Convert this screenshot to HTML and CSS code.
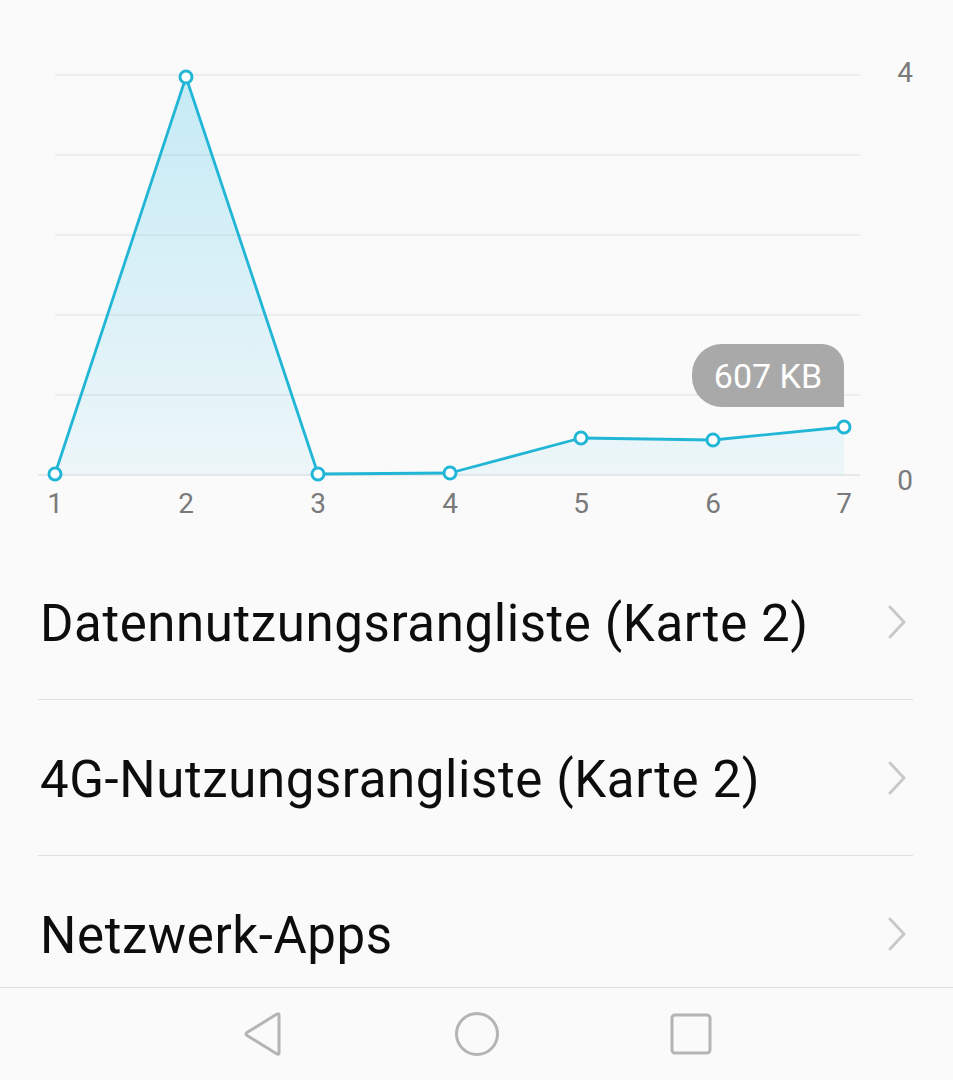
FILE: index.html
```html
<!DOCTYPE html>
<html lang="de">

<head>
    <meta charset="UTF-8">
    <meta name="viewport" content="width=device-width, initial-scale=1.0">
    <title>Datennutzung</title>
    <link rel="stylesheet" href="styles.css">
</head>

<body>
    <div class="screen">
        <div class="chart">
            <svg class="chart-svg" width="953" height="544" viewBox="0 0 953 544">
                <defs>
                    <linearGradient id="area-fill" gradientUnits="userSpaceOnUse" x1="0" y1="77" x2="0" y2="475">
                        <stop offset="0" stop-color="#1eb9e6" stop-opacity="0.24" />
                        <stop offset="1" stop-color="#1eb9e6" stop-opacity="0.06" />
                    </linearGradient>
                </defs>

                <!-- Rasterlinien -->
                <g class="grid">
                    <line x1="55" y1="75" x2="860" y2="75" />
                    <line x1="55" y1="155" x2="860" y2="155" />
                    <line x1="55" y1="235" x2="860" y2="235" />
                    <line x1="55" y1="315" x2="860" y2="315" />
                    <line x1="55" y1="395" x2="860" y2="395" />
                    <line x1="38" y1="475" x2="860" y2="475" class="axis" />
                </g>

                <polygon class="area" points="55,474 186,77 318,474 450,473 581,438 713,440 844,427 844,475 55,475" />
                <polyline class="line" points="55,474 186,77 318,474 450,473 581,438 713,440 844,427" />

                <g class="dots">
                    <circle cx="55" cy="474" r="6" />
                    <circle cx="186" cy="77" r="6" />
                    <circle cx="318" cy="474" r="6" />
                    <circle cx="450" cy="473" r="6" />
                    <circle cx="581" cy="438" r="6" />
                    <circle cx="713" cy="440" r="6" />
                    <circle cx="844" cy="427" r="6" />
                </g>

                <g class="x-labels">
                    <text x="55" y="513">1</text>
                    <text x="186" y="513">2</text>
                    <text x="318" y="513">3</text>
                    <text x="450" y="513">4</text>
                    <text x="581" y="513">5</text>
                    <text x="713" y="513">6</text>
                    <text x="844" y="513">7</text>
                </g>

                <g class="y-labels">
                    <text x="905" y="82">4</text>
                    <text x="905" y="490">0</text>
                </g>
            </svg>

            <div class="tooltip">607 KB</div>
        </div>

        <ul class="menu">
            <li class="menu-item">
                <span>Datennutzungsrangliste (Karte 2)</span>
                <svg class="chevron" width="18" height="34" viewBox="0 0 18 34"><path d="M2 2 L16 17 L2 32" /></svg>
            </li>
            <li class="menu-item">
                <span>4G-Nutzungsrangliste (Karte 2)</span>
                <svg class="chevron" width="18" height="34" viewBox="0 0 18 34"><path d="M2 2 L16 17 L2 32" /></svg>
            </li>
            <li class="menu-item">
                <span>Netzwerk-Apps</span>
                <svg class="chevron" width="18" height="34" viewBox="0 0 18 34"><path d="M2 2 L16 17 L2 32" /></svg>
            </li>
        </ul>

        <nav class="navbar">
            <svg class="nav-icon" width="42" height="46" viewBox="0 0 42 46">
                <path d="M37 4 L37 42 Q37 44 35 43 L5 24.5 Q3 23 5 21.5 L35 3 Q37 2 37 4 Z" />
            </svg>
            <svg class="nav-icon" width="46" height="46" viewBox="0 0 46 46">
                <circle cx="23" cy="23" r="20.5" />
            </svg>
            <svg class="nav-icon" width="42" height="42" viewBox="0 0 42 42">
                <rect x="2" y="2" width="38" height="38" rx="3" />
            </svg>
        </nav>
    </div>
</body>

</html>
```

FILE: styles.css
```css
:root {
    --bg-color: #fafafa;
    --line-color: #22b6d6;
    --grid-color: #e9e9e9;
    --label-color: #7a7a7a;
    --divider-color: #e0e0e0;
    --icon-color: #b4b4b4;
}

* {
    margin: 0;
    padding: 0;
    box-sizing: border-box;
}

body {
    background-color: var(--bg-color);
    font-family: Roboto, 'Noto Sans', sans-serif;
    color: #111;
}

.screen {
    width: 953px;
    height: 1080px;
    display: flex;
    flex-direction: column;
    overflow: hidden;
}

/* Diagramm */
.chart {
    position: relative;
    height: 544px;
    flex-shrink: 0;
}

.chart-svg {
    display: block;
}

.grid line {
    stroke: var(--grid-color);
    stroke-width: 1.5;
}

.grid .axis {
    stroke: #e2e2e2;
}

.area {
    fill: url(#area-fill);
}

.line {
    fill: none;
    stroke: var(--line-color);
    stroke-width: 2.8;
    stroke-linejoin: round;
}

.dots circle {
    fill: #fff;
    stroke: var(--line-color);
    stroke-width: 3;
}

.x-labels text,
.y-labels text {
    fill: var(--label-color);
    font-size: 28px;
    text-anchor: middle;
}

.tooltip {
    position: absolute;
    left: 692px;
    top: 344px;
    width: 152px;
    height: 63px;
    background-color: #a9a9a9;
    color: #fff;
    font-size: 34px;
    display: flex;
    align-items: center;
    justify-content: center;
    border-radius: 30px 22px 0 30px;
}

/* Liste */
.menu {
    list-style: none;
    flex: 1;
    overflow: hidden;
}

.menu-item {
    height: 156px;
    margin: 0 40px 0 38px;
    padding: 0 7px 0 2px;
    display: flex;
    align-items: center;
    justify-content: space-between;
    border-bottom: 1.5px solid var(--divider-color);
    font-size: 51px;
    letter-spacing: 0.6px;
    color: #0d0d0d;
}

.menu-item span {
    padding-top: 4px;
}

.chevron path {
    fill: none;
    stroke: #c9c9c9;
    stroke-width: 3;
    stroke-linecap: round;
    stroke-linejoin: round;
}

/* Navigationsleiste */
.navbar {
    height: 93px;
    flex-shrink: 0;
    border-top: 1.5px solid #dcdcdc;
    background-color: var(--bg-color);
    display: flex;
    align-items: center;
    justify-content: center;
    gap: 170px;
}

.nav-icon * {
    fill: none;
    stroke: var(--icon-color);
    stroke-width: 3;
    stroke-linejoin: round;
}
```
